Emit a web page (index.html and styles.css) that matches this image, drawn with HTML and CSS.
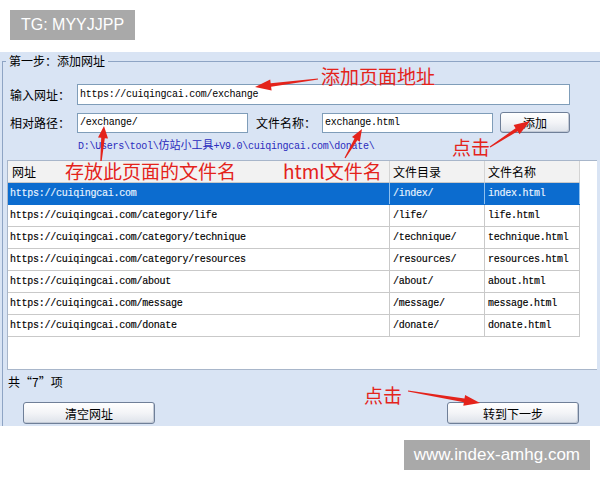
FILE: index.html
```html
<!DOCTYPE html>
<html>
<head>
    <meta charset="utf-8"/>
    <title>仿站小工具 - 添加网址</title>
    <link rel="stylesheet" href="styles.css">
</head>
<body>
    <div class="top-strip">
        <span class="tag">TG: MYYJJPP</span>
    </div>
    <div id="app">
        <fieldset class="step">
            <legend>第一步：添加网址</legend>
            <div class="row">
                <label class="field-label">输入网址：</label>
                <input class="box url-input" type="text" value="https://cuiqingcai.com/exchange">
            </div>
            <div class="row row-path">
                <label class="field-label">相对路径：</label>
                <input class="box short-input" type="text" value="/exchange/">
                <label class="field-label name-label">文件名称：</label>
                <input class="box short-input" type="text" value="exchange.html">
                <button class="btn btn-add">添加</button>
            </div>
            <div class="save-path">D:\Users\tool\<span class="cjk">仿站小工具</span>+V9.0\cuiqingcai.com\donate\</div>
            <div class="list">
                <div class="list-row list-head">
                    <div class="cell">网址</div>
                    <div class="cell">文件目录</div>
                    <div class="cell">文件名称</div>
                </div>
                <div class="list-row selected">
                    <div class="cell">https://cuiqingcai.com</div>
                    <div class="cell">/index/</div>
                    <div class="cell">index.html</div>
                </div>
                <div class="list-row">
                    <div class="cell">https://cuiqingcai.com/category/life</div>
                    <div class="cell">/life/</div>
                    <div class="cell">life.html</div>
                </div>
                <div class="list-row">
                    <div class="cell">https://cuiqingcai.com/category/technique</div>
                    <div class="cell">/technique/</div>
                    <div class="cell">technique.html</div>
                </div>
                <div class="list-row">
                    <div class="cell">https://cuiqingcai.com/category/resources</div>
                    <div class="cell">/resources/</div>
                    <div class="cell">resources.html</div>
                </div>
                <div class="list-row">
                    <div class="cell">https://cuiqingcai.com/about</div>
                    <div class="cell">/about/</div>
                    <div class="cell">about.html</div>
                </div>
                <div class="list-row">
                    <div class="cell">https://cuiqingcai.com/message</div>
                    <div class="cell">/message/</div>
                    <div class="cell">message.html</div>
                </div>
                <div class="list-row">
                    <div class="cell">https://cuiqingcai.com/donate</div>
                    <div class="cell">/donate/</div>
                    <div class="cell">donate.html</div>
                </div>
            </div>
            <div class="count">共“7”项</div>
            <div class="actions">
                <button class="btn btn-wide">清空网址</button>
                <button class="btn btn-wide">转到下一步</button>
            </div>
        </fieldset>
    </div>
    <div class="bottom-strip">
        <span class="tag">www.index-amhg.com</span>
    </div>

    <!-- red callouts drawn on top of the form -->
    <div class="notes">
        <svg class="arrows" width="600" height="480" viewBox="0 0 600 480">
            <polygon points="317.9,78.4 270.7,83.2 270.2,79.5 255,87 271.6,90.5 271.1,86.8 318.1,79.6"/>
            <polygon points="345.5,158.3 357.3,140.2 359.8,141.7 362,129 352.0,137.1 354.5,138.6 344.5,157.7"/>
            <polygon points="101.7,161.1 104.8,138.2 108.0,138.4 104,126 98.0,137.6 101.2,137.8 100.3,160.9"/>
            <polygon points="490.3,147.5 517.6,131.2 519.6,134.3 530,121 513.6,125.1 515.6,128.2 489.7,146.5"/>
            <polygon points="407.9,391.6 463.9,402.2 463.3,405.8 480,403 465.1,395.0 464.5,398.6 408.1,390.4"/>
        </svg>
        <span class="note note-url">添加页面地址</span>
        <span class="note note-dir">存放此页面的文件名</span>
        <span class="note note-name">html文件名</span>
        <span class="note note-add">点击</span>
        <span class="note note-next">点击</span>
    </div>
</body>
</html>
```

FILE: styles.css
```css
body {
    margin: 0;
    width: 600px;
    height: 480px;
    position: relative;
    overflow: hidden;
    background-color: #fff;
    font-family: "Noto Sans CJK SC", sans-serif;
    font-size: 12px;
    color: #000;
}
.top-strip {
    height: 52px;
    box-sizing: border-box;
    padding: 10px 0 0 10px;
}
.bottom-strip {
    height: 54px;
    box-sizing: border-box;
    padding: 14px 10px 0 0;
    display: flex;
    justify-content: flex-end;
}
.tag {
    display: inline-block;
    height: 30px;
    line-height: 30px;
    padding: 0 11px;
    background-color: #a9a9a9;
    color: #fff;
    font-family: "Liberation Sans", Arial, sans-serif;
    font-size: 16px;
}
.bottom-strip .tag {
    padding: 0 10px;
    font-size: 17px;
}
#app {
    height: 374px;
    overflow: hidden;
    background-color: #d9e4f4;
}
.step {
    margin: 0 0 0 2px;
    padding: 0;
    border: 1px solid #8ea4c4;
    border-right: none;
    border-bottom: none;
    height: 380px;
    min-inline-size: auto;
}
.step legend {
    margin-left: 3px;
    padding: 0 3px;
    height: 18px;
    line-height: 18px;
    font-size: 12px;
}
.row {
    display: flex;
    align-items: center;
    margin-top: 14px;
    padding-left: 7px;
}
.row-path {
    margin-top: 7px;
}
.field-label {
    width: 67px;
    flex: none;
    line-height: 14px;
}
.name-label {
    width: 66px;
    margin-left: 8px;
}
.box {
    box-sizing: border-box;
    margin: 0;
    padding: 0 2px;
    height: 21px;
    border: 1px solid #7f9db9;
    background: #fff;
    font-family: "Liberation Mono", monospace;
    font-size: 10px;
    letter-spacing: -0.25px;
    color: #000;
    outline: none;
}
.url-input {
    width: 493px;
}
.short-input {
    width: 171px;
    height: 20px;
}
.btn {
    box-sizing: border-box;
    height: 22px;
    padding: 0;
    border: 1px solid #6f7f98;
    border-radius: 3px;
    background: linear-gradient(#ffffff, #f3f4f7 50%, #dde2ea);
    box-shadow: inset -1px -1px 0 #c3cad6;
    font-family: "Noto Sans CJK SC", sans-serif;
    font-size: 12px;
    color: #000;
    cursor: pointer;
}
.btn-add {
    width: 70px;
    height: 21px;
    margin-left: 7px;
}
.btn-wide {
    width: 132px;
}
.save-path {
    height: 14px;
    overflow: hidden;
    margin-top: 4px;
    padding-left: 75px;
    line-height: 14px;
    font-family: "Liberation Mono", monospace;
    font-size: 10px;
    letter-spacing: -0.25px;
    color: #2b2bbd;
}
.save-path .cjk {
    font-family: "Noto Sans CJK SC", sans-serif;
    font-size: 11px;
    letter-spacing: 0;
}
.list {
    box-sizing: border-box;
    height: 210px;
    margin: 9px 3px 0 4px;
    border: 1px solid #a8b6ca;
    border-right: none;
    background: #fff;
}
.list-row {
    display: grid;
    grid-template-columns: 382px 95px 95px;
    height: 22px;
    box-sizing: border-box;
    border-bottom: 1px solid #c9c9c9;
    width: 572px;
    font-family: "Liberation Mono", monospace;
    font-size: 10px;
    letter-spacing: -0.25px;
    -webkit-text-stroke: 0.15px #000;
}
.cell {
    padding-left: 3px;
    line-height: 21px;
    border-right: 1px solid #c9c9c9;
    white-space: nowrap;
    overflow: hidden;
}
.cell:first-child {
    padding-left: 2px;
}
.list-head {
    background: #f2f2f2;
    font-family: "Noto Sans CJK SC", sans-serif;
    font-size: 12px;
    letter-spacing: 0;
    -webkit-text-stroke: 0;
}
.list-head .cell {
    border-right-color: #d4d4d4;
}
.list-head .cell:first-child {
    padding-left: 4px;
}
.selected {
    background: #0c6ccf;
    color: #eaf5ff;
    border-bottom-color: #0c6ccf;
    -webkit-text-stroke: 0.15px #eaf5ff;
}
.selected .cell {
    border-right-color: #8fc0ee;
}
.count {
    margin-top: 5px;
    padding-left: 5px;
    line-height: 14px;
}
.actions {
    display: flex;
    justify-content: space-between;
    margin-top: 13px;
    padding: 0 21px 0 20px;
}
.notes {
    position: absolute;
    left: 0;
    top: 0;
    width: 600px;
    height: 480px;
    pointer-events: none;
}
.arrows {
    position: absolute;
    left: 0;
    top: 0;
    fill: #e4231b;
}
.note {
    position: absolute;
    font-family: "Noto Sans CJK SC", sans-serif;
    font-size: 19px;
    line-height: 1;
    color: #e4231b;
    white-space: nowrap;
}
.note-url { left: 321px; top: 66px; }
.note-dir { left: 65px; top: 161px; }
.note-name { left: 283px; top: 161px; }
.note-add { left: 452px; top: 137px; }
.note-next { left: 364px; top: 385px; }
```
